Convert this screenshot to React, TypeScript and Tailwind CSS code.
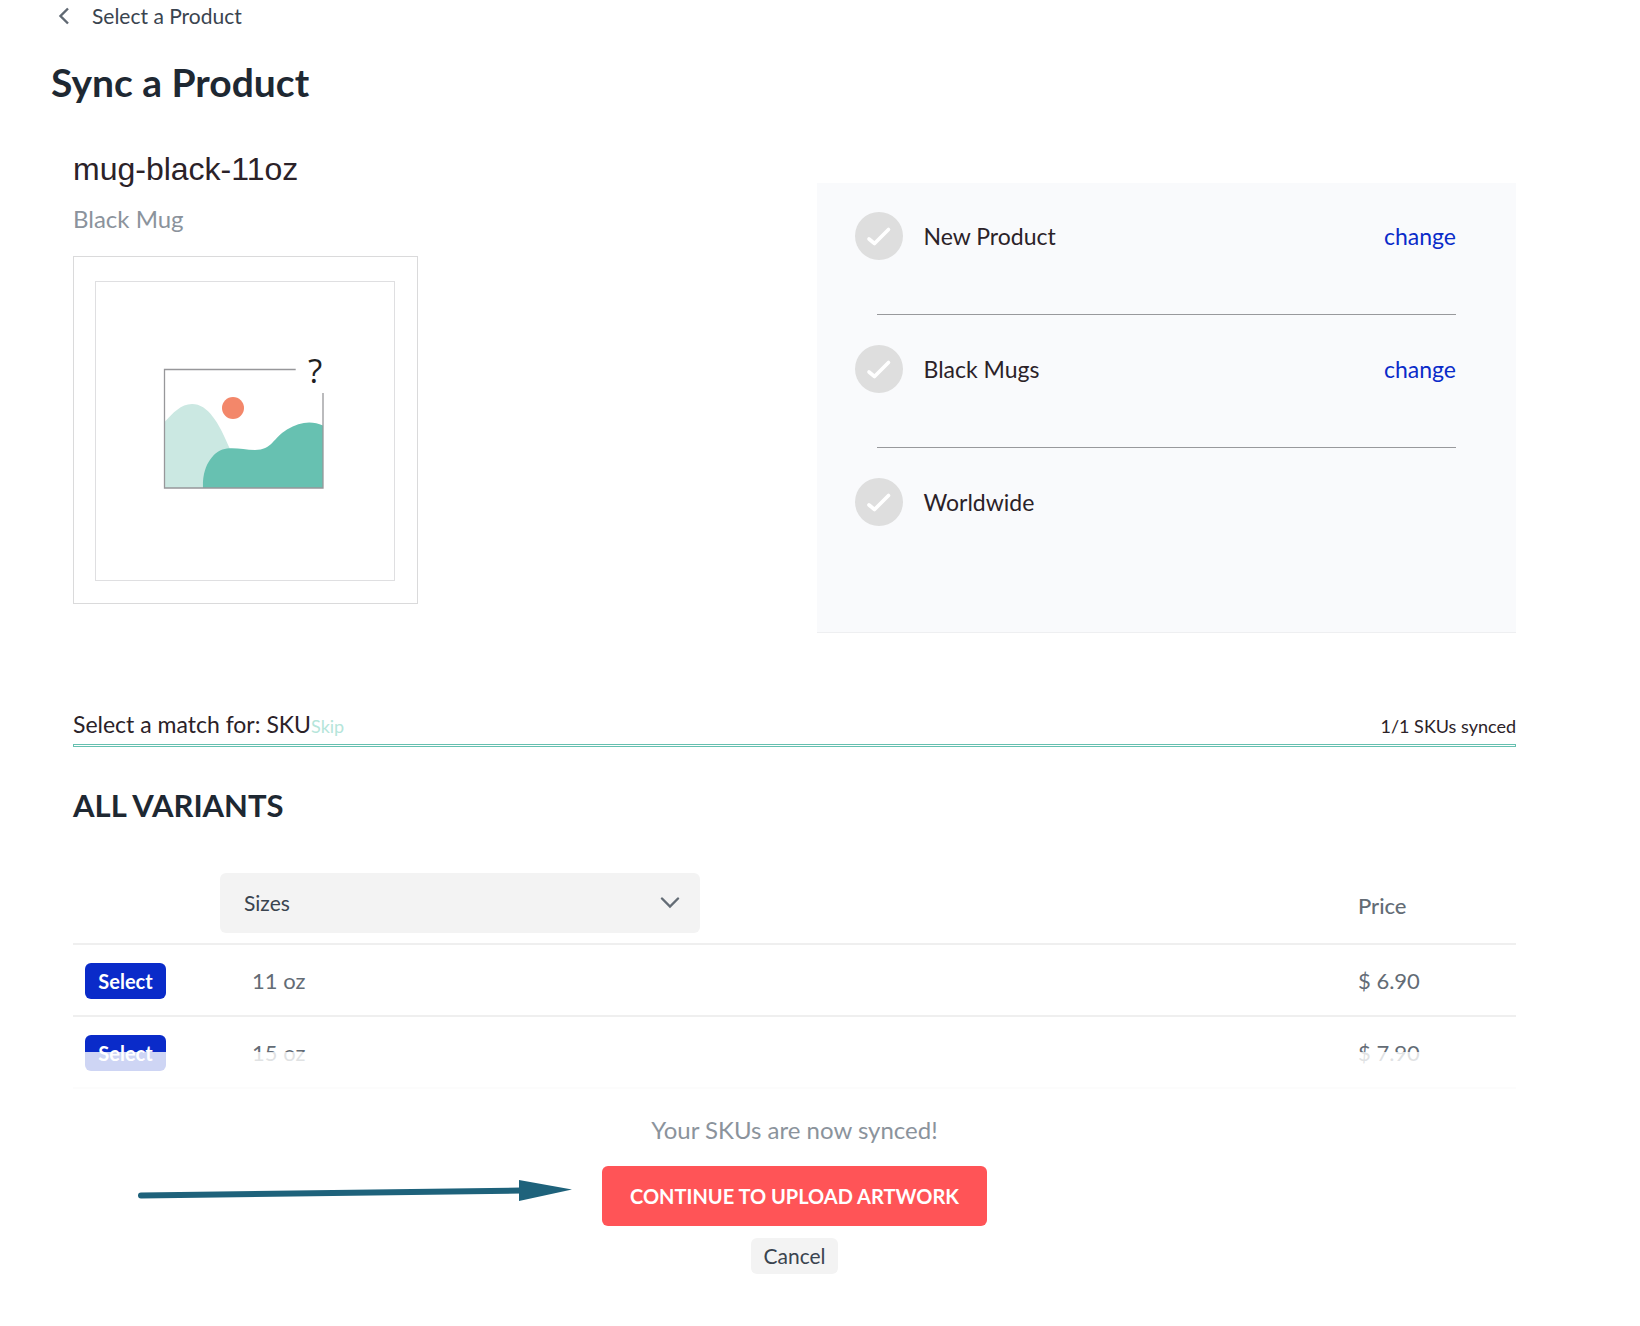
import { ReactNode } from "react";
import { clsx } from "clsx";

type Step = {
  label: string;
  canChange: boolean;
};

type Variant = {
  size: string;
  price: string;
};

const STEPS: Step[] = [
  { label: "New Product", canChange: true },
  { label: "Black Mugs", canChange: true },
  { label: "Worldwide", canChange: false },
];

const VARIANTS: Variant[] = [
  { size: "11 oz", price: "$ 6.90" },
  { size: "15 oz", price: "$ 7.90" },
];

const PlaceholderImage = () => (
  <svg viewBox="0 0 300 300" className="w-full" role="img" aria-label="No image">
    <rect x="0.5" y="0.5" width="299" height="299" fill="none" stroke="#dfdfe1" />
    <path
      d="M69.5 141 C78 132 86 123 97 123 C113 123 124 142 134.5 167 L134 207 H69.5 Z"
      fill="#cbe8e2"
    />
    <path
      d="M108 207 C107 184 119 169 132 167.5 C142 166.5 150 169 160 169 C177 169 178 157 192 148.5 C205 140.5 217 139.5 228 144.5 V207 Z"
      fill="#67c1b1"
    />
    <path d="M200.7 88.5 H69.5 V207 H228 V112" fill="none" stroke="#97979a" strokeWidth="1.3" />
    <circle cx="138" cy="127" r="11" fill="#f3876a" />
    <text
      x="220"
      y="102"
      textAnchor="middle"
      className="font-['Open_Sans',sans-serif] text-[33px]"
      fill="#1f1f1f"
    >
      ?
    </text>
  </svg>
);

const StepCheck = () => (
  <svg viewBox="0 0 48 48" className="size-12 shrink-0" aria-hidden="true">
    <circle cx="24" cy="24" r="24" fill="#dedede" />
    <path
      d="M14 27 L19.5 31.5 L33.5 17.5"
      fill="none"
      stroke="#ffffff"
      strokeWidth="3.6"
      strokeLinecap="round"
      strokeLinejoin="round"
    />
  </svg>
);

const StepRow = ({ label, canChange }: Step) => (
  <li className="group">
    <div className="flex items-center h-12 text-[23px]">
      <StepCheck />
      <span className="grow pl-[21px]">{label}</span>
      {canChange && (
        <a href="#change" className="text-[#0a2bc9]">
          change
        </a>
      )}
    </div>
    <div className="mt-[54px] mb-[30px] ml-[22px] border-t border-[#98999c] group-last:hidden" />
  </li>
);

const Cell = ({ children, className }: { children: ReactNode; className?: string }) => (
  <td className={clsx("h-[72px] border-b-2 border-[#efefef] px-3 pt-0.5", className)}>
    {children}
  </td>
);

export default function App() {
  return (
    <main className="pl-[73px] pr-[124px] pb-[52px] bg-white font-['Lato',sans-serif] text-2xl text-[#2b2228]">
      <header className="-ml-[22px]">
        <a
          href="#products"
          className="inline-flex items-center gap-[22px] h-8 pl-[7px] text-[21px] text-[#3a444f]"
        >
          <svg viewBox="0 0 12 18" className="w-3 h-[18px]" aria-hidden="true">
            <path d="M10 1.5 L2.5 9 L10 16.5" fill="none" stroke="#5f6872" strokeWidth="2.4" />
          </svg>
          Select a Product
        </a>
        <h1 className="mt-6 text-[39px] leading-[52px] font-bold text-[#1e2832]">Sync a Product</h1>
      </header>

      <section className="grid grid-cols-2 gap-11 mt-10">
        <div>
          <h2 className="font-['Liberation_Sans',sans-serif] text-[32px] leading-[42px]">
            mug-black-11oz
          </h2>
          <p className="mt-3 leading-[34px] text-[#8b939c]">Black Mug</p>
          <div className="w-[345px] mt-5 pl-[21px] pr-[22px] pt-6 pb-[22px] border border-[#dadadb]">
            <PlaceholderImage />
          </div>
        </div>
        <ul className="mt-[35px] pl-[38px] pr-[60px] pt-[29px] pb-[106px] bg-[#f9fafc] border-b border-[#eeeff1]">
          {STEPS.map((step) => (
            <StepRow key={step.label} {...step} />
          ))}
        </ul>
      </section>

      <section className="mt-[75px]">
        <div className="flex items-baseline leading-8">
          <h3 className="text-[23px]">Select a match for: SKU</h3>
          <button type="button" className="text-lg text-[#b5e5da]">
            Skip
          </button>
          <span className="ml-auto text-lg">1/1 SKUs synced</span>
        </div>
        <div className="h-[3px] mt-1 border border-[#66c0b0]" />
      </section>

      <section className="mt-[38px]">
        <h2 className="text-[31px] leading-10 font-bold text-[#1e2832]">ALL VARIANTS</h2>
        <table className="w-full mt-9 table-fixed border-separate border-spacing-0 text-left text-[#636c75]">
          <thead>
            <tr>
              <th className="w-[147px] border-b-2 border-[#efefef]" />
              <th className="pt-3 pb-[10px] border-b-2 border-[#efefef] font-normal">
                <div className="relative w-[480px] max-w-full">
                  <select
                    aria-label="Sizes"
                    className="w-full h-[60px] px-6 appearance-none rounded-md bg-[#f3f3f3] text-[21px] text-[#3a444f]"
                  >
                    <option>Sizes</option>
                  </select>
                  <svg
                    viewBox="0 0 20 12"
                    className="absolute right-5 top-6 w-5 h-3 pointer-events-none"
                    aria-hidden="true"
                  >
                    <path
                      d="M2 1.500 L10 9.500 L18 1.500"
                      fill="none"
                      stroke="#636c75"
                      strokeWidth="2.400"
                      strokeLinecap="round"
                    />
                  </svg>
                </div>
              </th>
              <th className="w-[170px] px-3 pt-2 border-b-2 border-[#efefef] text-[22px] font-medium">
                Price
              </th>
            </tr>
          </thead>
          <tbody>
            {VARIANTS.map(({ size, price }) => (
              <tr key={size}>
                <Cell>
                  <button
                    type="button"
                    className="block w-[81px] h-9 rounded-md bg-[#0a2bc9] text-xl leading-9 font-bold text-white"
                  >
                    Select
                  </button>
                </Cell>
                <Cell className="pl-8 text-[22px]">{size}</Cell>
                <Cell className="text-[22px]">{price}</Cell>
              </tr>
            ))}
          </tbody>
        </table>
      </section>

      {/* translucent footer laid over the end of the variant list */}
      <footer className="relative flex flex-col items-center -mt-[37px] pt-[62px] bg-white/80">
        <p className="leading-8 text-[#8b939c]">Your SKUs are now synced!</p>
        <button
          type="button"
          className="w-[385px] h-[60px] mt-5 rounded-md bg-[#ff5457] text-xl font-bold text-white"
        >
          CONTINUE TO UPLOAD ARTWORK
        </button>
        <button
          type="button"
          className="w-[87px] h-9 mt-3 rounded-md bg-[#f3f3f3] text-[21px] leading-9 text-[#3a444f]"
        >
          Cancel
        </button>
        <svg
          viewBox="0 0 436 24"
          className="absolute left-16 top-[126px] w-[436px] h-6"
          aria-hidden="true"
        >
          <path d="M4 17.5 L384 12.5" stroke="#1e627b" strokeWidth="6" strokeLinecap="round" />
          <path d="M382 2 L435 11.5 L382 23 Z" fill="#1e627b" />
        </svg>
      </footer>
    </main>
  );
}
